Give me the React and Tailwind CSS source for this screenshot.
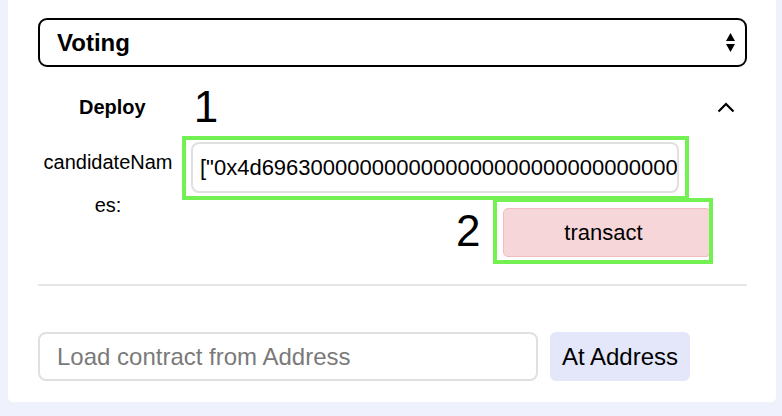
import React from "react";

const font = { fontFamily: '"Liberation Sans", Arial, sans-serif' };

const App = () => {
  return (
    <div className="min-h-[416px] bg-[#eff1fd] pl-[8px] pr-[6px] pb-[13px]" style={font}>
      <div className="bg-white rounded-b-[5px] pl-[30px] pr-[29px] pt-[18px] pb-[21px]">
        {/* contract select */}
        <div className="flex items-center justify-between h-[49px] border-2 border-black rounded-[9px] pl-[17px] pr-[10px]">
          <span className="text-[24px] font-bold text-black">Voting</span>
          <div className="flex flex-col items-center gap-[3px]">
            <svg width="9" height="8" viewBox="0 0 9 8">
              <path d="M4.5 0 L9 8 L0 8 Z" fill="#000" />
            </svg>
            <svg width="9" height="8" viewBox="0 0 9 8">
              <path d="M0 0 L9 0 L4.5 8 Z" fill="#000" />
            </svg>
          </div>
        </div>

        {/* deploy header */}
        <div className="flex items-center h-[46px] mt-[17px]">
          <span className="ml-[41px] text-[20px] font-bold text-black">Deploy</span>
          <span className="ml-[48px] text-[44px] leading-none text-black">1</span>
          <svg className="ml-auto mr-[12px]" width="18" height="11" viewBox="0 0 18 11">
            <path d="M1.5 9.5 L9 2 L16.5 9.5" fill="none" stroke="#000" strokeWidth="2.2" />
          </svg>
        </div>

        {/* params */}
        <div className="flex mt-[6px]">
          <div className="w-[140px] shrink-0 pt-[5px] text-center text-[20px] leading-[43px] text-black">
            candidateNam
            <br />
            es:
          </div>
          <div className="ml-[4px]">
            <div className="w-[507px] h-[64px] border-4 border-[#74f152] pl-[5px] pr-[6px] pt-[2px]">
              <div className="h-[51px] border-2 border-[#e0e0e0] rounded-[8px] flex items-center pl-[7px] overflow-hidden whitespace-nowrap text-[22px] text-black">
                ["0x4d696300000000000000000000000000000000000000000000000000000000","0x4d69630000"]
              </div>
            </div>
            <div className="flex items-center -mt-[2px]">
              <span className="ml-[274px] text-[44px] leading-none text-black">2</span>
              <div className="ml-[13px] w-[220px] h-[66px] border-4 border-[#74f152] pl-[6px] pt-[6px] overflow-hidden">
                <button className="w-[208px] h-[49px] bg-[#f7d6d9] border border-[#f0bcc1] rounded-[5px] pr-[8px] text-[22px] text-black">
                  transact
                </button>
              </div>
            </div>
          </div>
        </div>

        <div className="h-[2px] bg-[#e6e6e6] mt-[20px]" />

        {/* at address */}
        <div className="flex items-center gap-[12px] mt-[46px]">
          <input
            className="w-[500px] h-[49px] border-2 border-[#e0e0e0] rounded-[8px] pl-[17px] text-[24px] text-black placeholder:text-[#7a7a7a] outline-none"
            placeholder="Load contract from Address"
            style={font}
          />
          <button className="w-[140px] h-[49px] bg-[#e3e7f9] rounded-[6px] text-[24px] text-black" style={font}>
            At Address
          </button>
        </div>
      </div>
    </div>
  );
};

export default App;
